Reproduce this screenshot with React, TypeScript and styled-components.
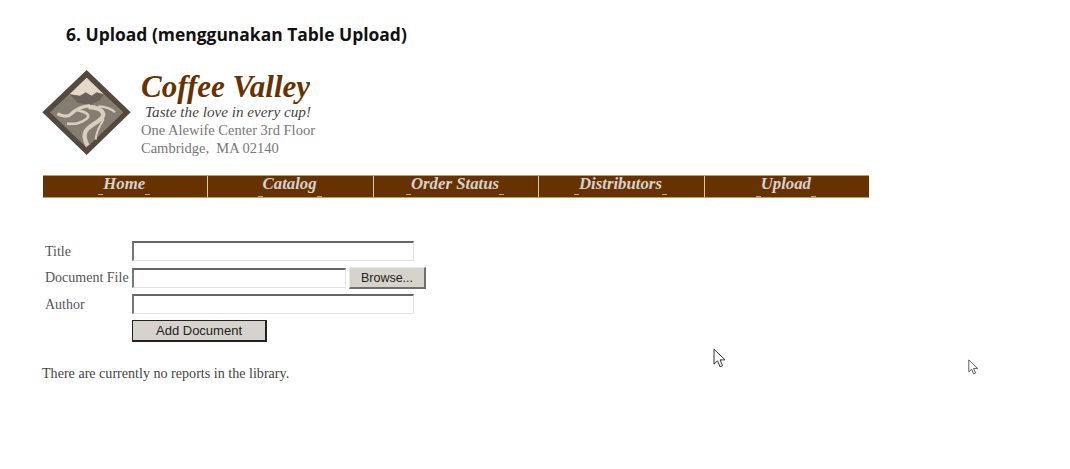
import React from "react";
import styled, { createGlobalStyle } from "styled-components";

const GlobalStyle = createGlobalStyle`
  html, body {
    margin: 0;
    background: #fff;
  }
`;

const Page = styled.div`
  position: relative;
  width: 1070px;
  height: 469px;
  overflow: hidden;
  background: #fff;
  padding: 22px 0 0 42px;
  box-sizing: border-box;
  font-family: "Liberation Serif", serif;
  color: #555;
`;

const Heading = styled.h1`
  margin: 0 0 0 24px;
  font-family: "Open Sans", sans-serif;
  font-size: 17.45px;
  line-height: 24px;
  font-weight: 700;
  color: #111;
`;

const Masthead = styled.div`
  display: flex;
  margin-top: 24px;
  height: 86px;
`;

const LogoBox = styled.div`
  width: 99px;
  flex: none;
`;

const Brand = styled.div`
  display: flex;
  flex-direction: column;
`;

const BrandName = styled.div`
  font-size: 31px;
  line-height: 33px;
  font-weight: 700;
  font-style: italic;
  color: #663300;
`;

const Tagline = styled.div`
  font-size: 15.2px;
  line-height: 18px;
  font-style: italic;
  color: #444;
  padding-left: 4px;
`;

const Address = styled.div`
  font-size: 14.5px;
  line-height: 18px;
  color: #777;
  white-space: pre;
`;

const Nav = styled.nav`
  display: flex;
  width: 826px;
  height: 23px;
  margin: 19px 0 0 1px;
  background: #663300;
  border-top: 1px solid #b89c72;
  border-bottom: 1px solid #b89c72;
  box-sizing: border-box;
`;

const NavItem = styled.a`
  flex: 1;
  display: flex;
  justify-content: center;
  padding-right: 2px;
  font-size: 16.8px;
  line-height: 16px;
  font-weight: 700;
  font-style: italic;
  color: #d8d0d0;
  border-left: 1px solid #d8c8a8;
  &:first-child {
    border-left: none;
  }
`;

const NavLabel = styled.span<{ $drop: number }>`
  position: relative;
  padding: 0 3px;
  height: 16px;
  &::before,
  &::after {
    content: "";
    position: absolute;
    bottom: ${(p) => -3 - p.$drop}px;
    width: 5px;
    height: 1px;
    background: #b8a890;
  }
  &::before {
    left: -2px;
  }
  &::after {
    right: -2px;
  }
`;

const Form = styled.div`
  display: grid;
  grid-template-columns: 87px auto;
  justify-content: start;
  align-items: start;
  row-gap: 5px;
  margin: 43px 0 0 3px;
`;

const Label = styled.label`
  font-size: 14px;
  line-height: 21px;
  color: #555;
`;

const FieldRow = styled.div`
  display: flex;
  align-items: center;
  gap: 3px;
`;

const Input = styled.input<{ $width: number }>`
  width: ${(p) => p.$width}px;
  height: 20px;
  box-sizing: border-box;
  padding: 0;
  background: #fff;
  border: 1px solid #e2e2e2;
  border-top: 2px solid #666;
  border-left: 2px solid #777;
  border-radius: 0;
  outline: none;
`;

const BrowseButton = styled.button`
  width: 77px;
  height: 22px;
  box-sizing: border-box;
  padding: 0;
  background: #d6d3cc;
  border: 1px solid #e8e8e4;
  border-right: 2px solid #6e6e6e;
  border-bottom: 2px solid #6e6e6e;
  border-radius: 0;
  font-family: "Liberation Sans", sans-serif;
  font-size: 12.5px;
  color: #222;
`;

const SubmitButton = styled.button`
  grid-column: 2;
  width: 135px;
  height: 22px;
  box-sizing: border-box;
  padding: 0;
  background: #d6d3cc;
  border: 1px solid #222;
  border-right: 2px solid #222;
  border-bottom: 2px solid #222;
  border-radius: 0;
  font-family: "Liberation Sans", sans-serif;
  font-size: 13px;
  color: #222;
`;

const Notice = styled.p`
  margin: 22px 0 0;
  font-size: 14.1px;
  line-height: 18px;
  color: #444;
`;

const Cursor = styled.svg<{ $x: number; $y: number }>`
  position: absolute;
  left: ${(p) => p.$x}px;
  top: ${(p) => p.$y}px;
`;

const Logo = () => (
  <svg width="89" height="85" viewBox="22 25 265 255">
    <polygon points="155,25 287,152 155,280 22,152" fill="#54483f" />
    <polygon points="155,48 265,152 155,258 45,152" fill="#857c72" />
    <polygon points="155,48 206,98 185,94 170,104 152,94 135,104 104,98" fill="#e4d9c9" />
    <polygon points="104,98 135,102 152,92 170,102 185,92 206,98 195,116 165,130 130,124" fill="#6b6158" />
    <path d="M165 132c-22 2-42 10-58 26-8 8-24 6-40-2" fill="none" stroke="#d9cebd" strokeWidth="10" />
    <path d="M128 146c22 4 42 14 26 26-18 14-42 16-58 14" fill="none" stroke="#d9cebd" strokeWidth="8" />
    <path d="M160 136c22 0 48 8 44 26-4 16-34 24-50 44-10 14-4 32 4 46" fill="none" stroke="#d9cebd" strokeWidth="13" />
    <path d="M190 134c24 0 44 10 50 18" fill="none" stroke="#d9cebd" strokeWidth="7" />
    <path d="M206 172c-8 20-22 30-24 62" fill="none" stroke="#d9cebd" strokeWidth="6" />
  </svg>
);

const Pointer = ({ x, y, size }: { x: number; y: number; size: number }) => (
  <Cursor $x={x} $y={y} width={size} height={size * 1.7} viewBox="0 0 12 20">
    <path
      d="M1 1v15l3.6-3.4 2.4 6 2.6-1.1-2.5-5.8h5z"
      fill="#fff"
      stroke="#333"
      strokeWidth="1"
      strokeLinejoin="round"
    />
  </Cursor>
);

const navItems = [
  { label: "Home", drop: 0 },
  { label: "Catalog", drop: 2 },
  { label: "Order Status", drop: 0 },
  { label: "Distributors", drop: 0 },
  { label: "Upload", drop: 2 },
];

export default function App() {
  return (
    <Page>
      <GlobalStyle />
      <Heading>6. Upload (menggunakan Table Upload)</Heading>
      <Masthead>
        <LogoBox>
          <Logo />
        </LogoBox>
        <Brand>
          <BrandName>Coffee Valley</BrandName>
          <Tagline>Taste the love in every cup!</Tagline>
          <Address>One Alewife Center 3rd Floor</Address>
          <Address>Cambridge,  MA 02140</Address>
        </Brand>
      </Masthead>
      <Nav>
        {navItems.map((item) => (
          <NavItem key={item.label}>
            <NavLabel $drop={item.drop}>{item.label}</NavLabel>
          </NavItem>
        ))}
      </Nav>
      <Form>
        <Label>Title</Label>
        <Input $width={282} />
        <Label>Document File</Label>
        <FieldRow>
          <Input $width={214} />
          <BrowseButton>Browse...</BrowseButton>
        </FieldRow>
        <Label>Author</Label>
        <Input $width={282} />
        <SubmitButton>Add Document</SubmitButton>
      </Form>
      <Notice>There are currently no reports in the library.</Notice>
      <Pointer x={713} y={348} size={12} />
      <Pointer x={968} y={359} size={9.5} />
    </Page>
  );
}
